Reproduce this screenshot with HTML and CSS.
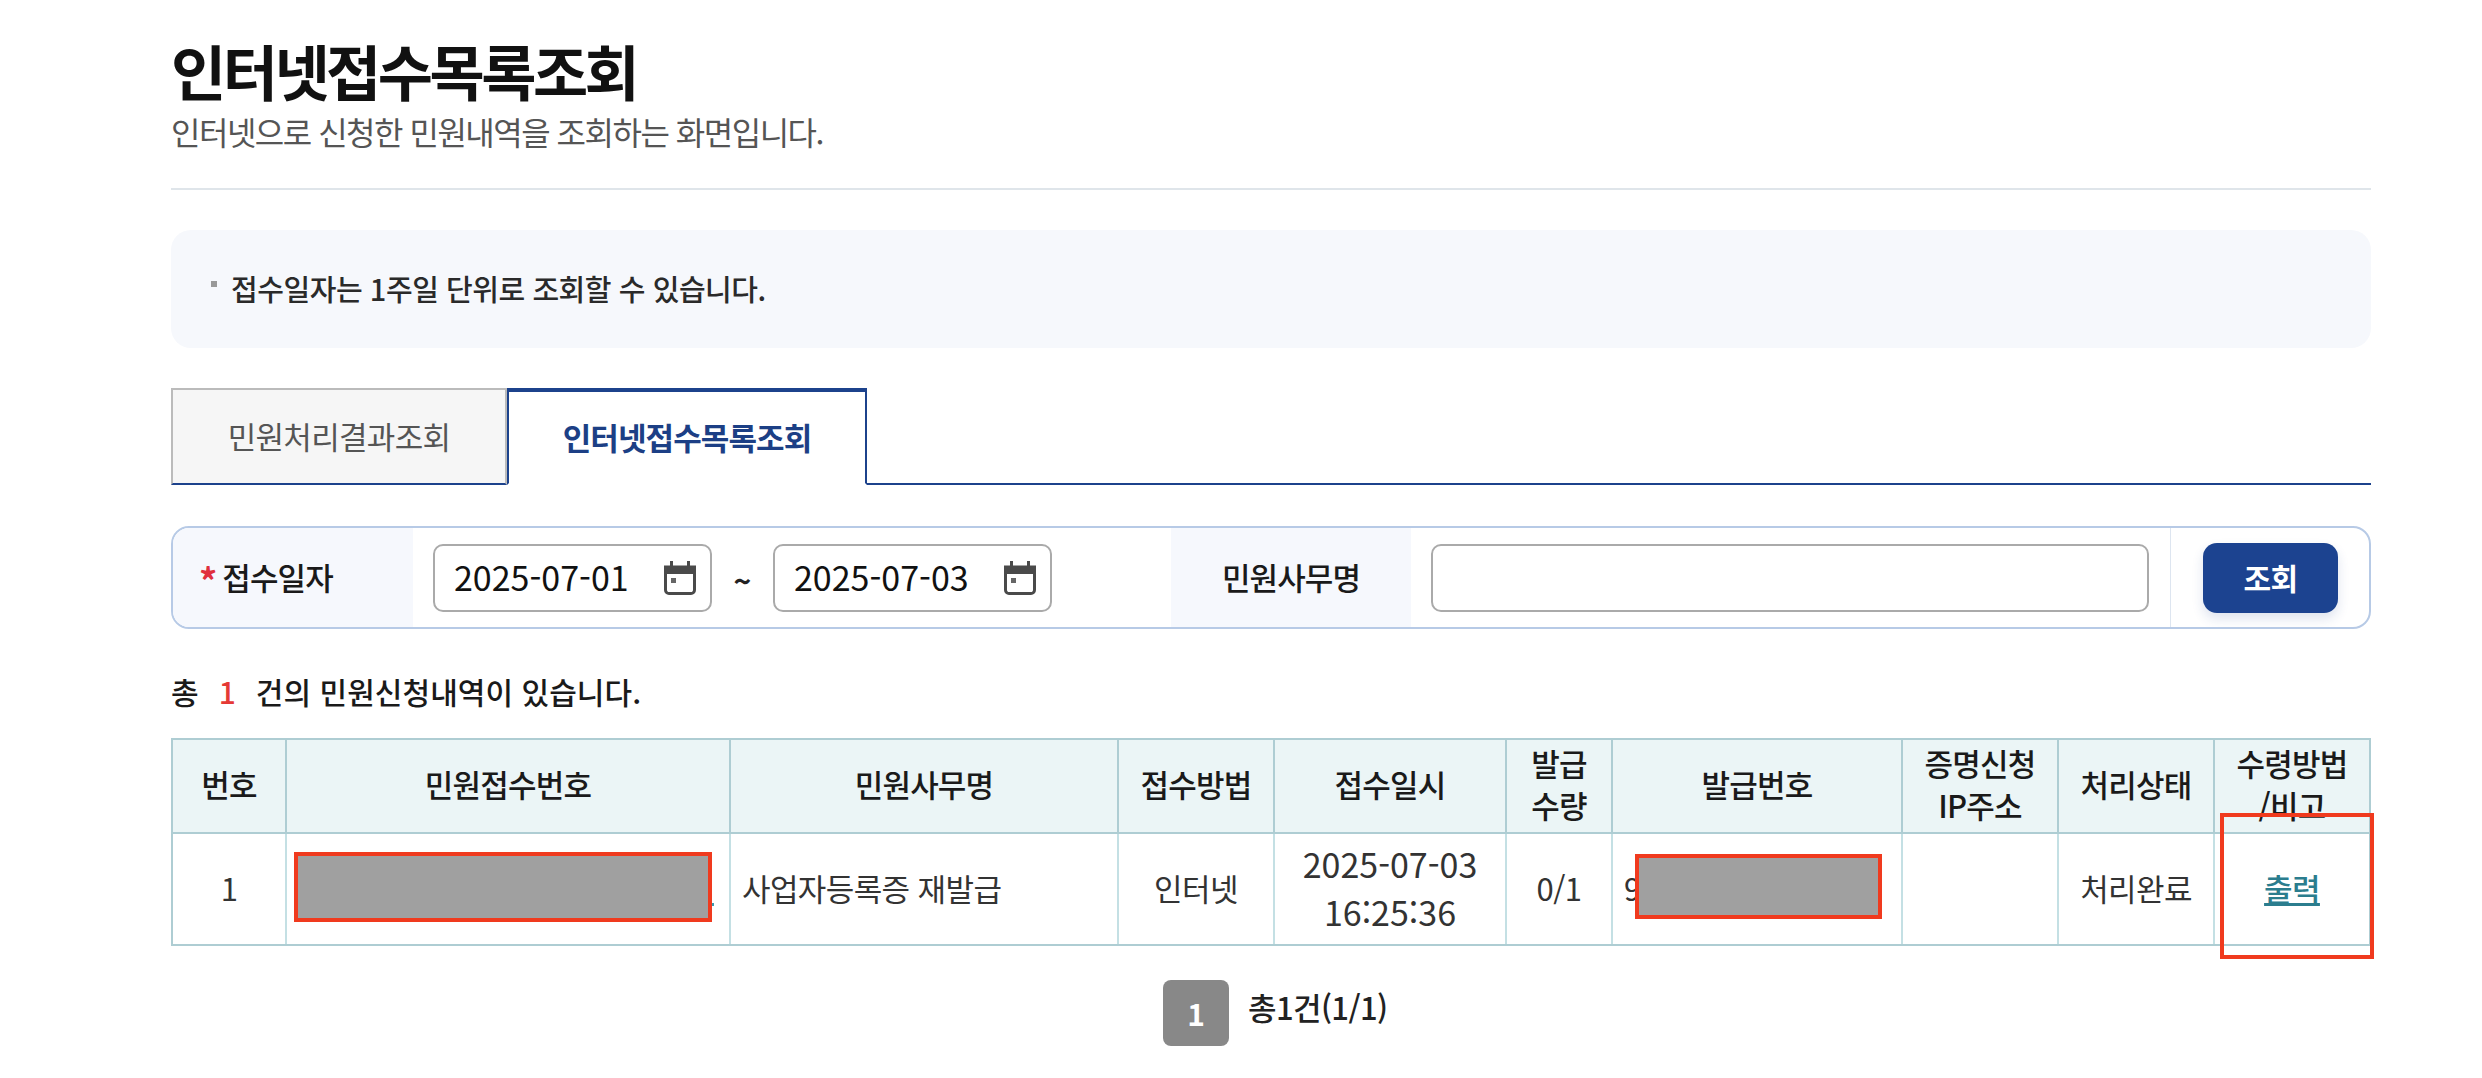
FILE: index.html
```html
<!DOCTYPE html>
<html lang="ko">
<head>
<meta charset="utf-8">
<title>인터넷접수목록조회</title>
<link rel="stylesheet" href="styles.css">
</head>
<body>
<main class="page">
  <header class="head">
    <h1 class="title">인터넷접수목록조회</h1>
    <p class="subtitle">인터넷으로 신청한 민원내역을 조회하는 화면입니다.</p>
  </header>
  <section class="notice"><span class="bullet"></span><span>접수일자는 1주일 단위로 조회할 수 있습니다.</span></section>
  <nav class="tabs">
    <a class="tab">민원처리결과조회</a>
    <a class="tab active">인터넷접수목록조회</a>
  </nav>
  <form class="search">
    <div class="label date-label"><span class="req">*</span>접수일자</div>
    <div class="dates">
      <div class="field date"><span>2025-07-01</span>
        <svg class="cal" viewBox="0 0 32 34"><path class="cal-body" d="M1.5 6h29v23a3.5 3.5 0 0 1-3.5 3.5H5A3.5 3.5 0 0 1 1.5 29z"/><path class="cal-head" d="M0 5h6V0h3v5h14V0h3v5h6v8H0z"/><rect class="cal-dot" x="7" y="17" width="5" height="5"/></svg>
      </div>
      <span class="tilde">~</span>
      <div class="field date"><span>2025-07-03</span>
        <svg class="cal" viewBox="0 0 32 34"><path class="cal-body" d="M1.5 6h29v23a3.5 3.5 0 0 1-3.5 3.5H5A3.5 3.5 0 0 1 1.5 29z"/><path class="cal-head" d="M0 5h6V0h3v5h14V0h3v5h6v8H0z"/><rect class="cal-dot" x="7" y="17" width="5" height="5"/></svg>
      </div>
    </div>
    <div class="label name-label">민원사무명</div>
    <div class="name-cell"><div class="field name"></div></div>
    <div class="btn-cell"><button class="btn" type="button">조회</button></div>
  </form>
  <p class="count">총<em>1</em>건의 민원신청내역이 있습니다.</p>
  <div class="table-wrap">
    <table class="grid">
      <colgroup>
        <col class="c1"><col class="c2"><col class="c3"><col class="c4"><col class="c5"><col class="c6"><col class="c7"><col class="c8"><col class="c9"><col class="c10">
      </colgroup>
      <thead>
        <tr><th>번호</th><th>민원접수번호</th><th>민원사무명</th><th>접수방법</th><th>접수일시</th><th>발급<br>수량</th><th>발급번호</th><th>증명신청<br>IP주소</th><th>처리상태</th><th>수령방법<br>/비고</th></tr>
      </thead>
      <tbody>
        <tr>
          <td>1</td>
          <td></td>
          <td class="left">사업자등록증 재발급</td>
          <td>인터넷</td>
          <td class="when">2025-07-03<br>16:25:36</td>
          <td>0/1</td>
          <td class="left num">9</td>
          <td></td>
          <td>처리완료</td>
          <td><a class="print">출력</a></td>
        </tr>
      </tbody>
    </table>
    <div class="redact r1"></div>
    <div class="redact r2"></div>
    <div class="mark"></div>
  </div>
  <div class="pager"><span class="pg">1</span><span class="pg-text">총1건(1/1)</span></div>
</main>
</body>
</html>
```
FILE: styles.css
```css
* { box-sizing: border-box; }
html, body { margin: 0; padding: 0; background: #fff; }
body {
  font-family: "Noto Sans CJK KR", "Noto Sans", sans-serif;
  color: #1a1a1a;
  overflow: hidden;
}
.page { width: 2200px; margin-left: 171px; padding-top: 30px; }

.head { height: 160px; border-bottom: 2px solid #dfe5ea; }
.title { margin: 0; font-size: 60px; line-height: 79px; font-weight: 700; letter-spacing: -3.5px; color: #111; }
.subtitle { margin: 0; font-size: 32px; line-height: 44px; font-weight: 400; letter-spacing: -1.5px; color: #555; }

.notice {
  margin-top: 40px; height: 118px; border-radius: 20px; background: #f6f8fc;
  display: flex; align-items: center; gap: 14px; padding: 0 0 3px 40px;
  font-size: 29px; font-weight: 500; letter-spacing: -0.45px; color: #2a2a2a;
}
.bullet { width: 6px; height: 6px; background: #999; margin-top: -8px; }

.tabs { margin-top: 40px; height: 97px; display: flex; border-bottom: 2px solid #1c428c; }
.tab {
  width: 336px; height: 97px; display: flex; align-items: center; justify-content: center; padding-bottom: 3px;
  background: #f6f6f6; border: 2px solid #bbb; border-bottom: 2px solid #1c428c;
  font-size: 31px; letter-spacing: -0.7px; color: #555;
}
.tab.active {
  width: 360px; background: #fff; border: 2px solid #1c428c; border-top-width: 4px; border-bottom-color: #fff;
  color: #1c3f85; font-weight: 700; letter-spacing: -0.9px;
}

.search {
  margin-top: 41px; height: 103px; border: 2px solid #b7cae6; border-radius: 18px; overflow: hidden;
  display: flex; align-items: center; font-size: 31px;
}
.label { align-self: stretch; display: flex; align-items: center; padding-bottom: 3px; background: #f6f8fd; font-weight: 500; letter-spacing: -0.9px; color: #1a1a1a; }
.date-label { width: 240px; padding-left: 26px; }
.req { color: #e0303e; margin-right: 6px; font-size: 36px; line-height: 30px; font-weight: 700; padding-top: 6px; }
.dates { width: 758px; display: flex; align-items: center; padding-left: 20px; }
.field { height: 68px; border: 2px solid #aaa; border-radius: 10px; background: #fff; }
.date { width: 279px; display: flex; align-items: center; justify-content: space-between; padding: 0 14px 2px 19px; font-size: 34px; letter-spacing: 0; color: #111; }
.tilde { width: 61px; text-align: center; font-size: 30px; font-weight: 700; padding-top: 4px; color: #222; }
.cal { width: 32px; height: 34px; margin-top: 2px; }
.cal-body { fill: #fff; stroke: #4a4a4a; stroke-width: 3; }
.cal-head { fill: #4a4a4a; }
.cal-dot { fill: #666; }
.name-label { width: 240px; justify-content: center; }
.name-cell { width: 759px; align-self: stretch; display: flex; align-items: center; padding: 0 20px; }
.name { width: 718px; }
.btn-cell { flex: 1; align-self: stretch; display: flex; align-items: center; padding-left: 32px; border-left: 1px solid #dde5f0; }
.btn {
  width: 135px; height: 70px; border: 0; border-radius: 14px; background: #1c4390; color: #fff; padding-bottom: 3px;
  font-family: inherit; font-size: 30px; font-weight: 700; letter-spacing: -0.5px;
  box-shadow: 0 6px 12px rgba(28, 67, 144, 0.14);
}

.count { margin: 0; height: 109px; padding-top: 40px; font-size: 30px; line-height: 44px; font-weight: 500; letter-spacing: 0.05px; color: #1a1a1a; }
.count em { font-style: normal; color: #e53935; margin: 0 20px; font-weight: 500; }

.table-wrap { position: relative; }
.grid { width: 2200px; table-layout: fixed; border-collapse: separate; border-spacing: 0; border: 2px solid #aecdd3; }
.c1 { width: 114px; } .c2 { width: 444px; } .c3 { width: 388px; } .c4 { width: 156px; } .c5 { width: 232px; }
.c6 { width: 106px; } .c7 { width: 290px; } .c8 { width: 156px; } .c9 { width: 156px; } .c10 { width: 154px; }
.grid th {
  height: 94px; padding: 0 0 4px; background: #ebf5f6; border-right: 2px solid #aecdd3; border-bottom: 2px solid #aecdd3;
  font-size: 31px; line-height: 42px; font-weight: 500; letter-spacing: -0.8px; color: #1a1a1a; text-align: center;
}
.grid td {
  height: 110px; padding: 0 0 2px; border-right: 2px solid #c4e0e4; text-align: center;
  font-size: 31px; line-height: 48px; letter-spacing: -0.6px; color: #333;
}
.grid th:last-child, .grid td:last-child { border-right: 0; }
.grid td.left { text-align: left; padding-left: 11px; }
.grid td.when { font-size: 34px; line-height: 48px; letter-spacing: 0; }
.print { color: #2b7d8e; text-decoration: underline; font-weight: 500; }

.redact { position: absolute; background: #a0a0a0; border: 4px solid #f03a1e; }
.r1 { left: 123px; top: 114px; width: 418px; height: 70px; }
.r1::after { content: ""; position: absolute; right: -6px; top: 47px; width: 2px; height: 3px; background: #3a9bb0; }
.r2 { left: 1464px; top: 116px; width: 247px; height: 65px; }
.mark { position: absolute; left: 2049px; top: 75px; width: 154px; height: 146px; border: 4px solid #f03a1e; }

.pager { margin-top: 34px; display: flex; align-items: center; padding-left: 992px; }
.pg { width: 66px; height: 66px; border-radius: 8px; background: #888; color: #fff; font-size: 30px; font-weight: 700; display: flex; align-items: center; justify-content: center; }
.pg-text { margin-left: 19px; margin-top: -14px; font-size: 31px; font-weight: 500; letter-spacing: -0.6px; color: #222; }
```
